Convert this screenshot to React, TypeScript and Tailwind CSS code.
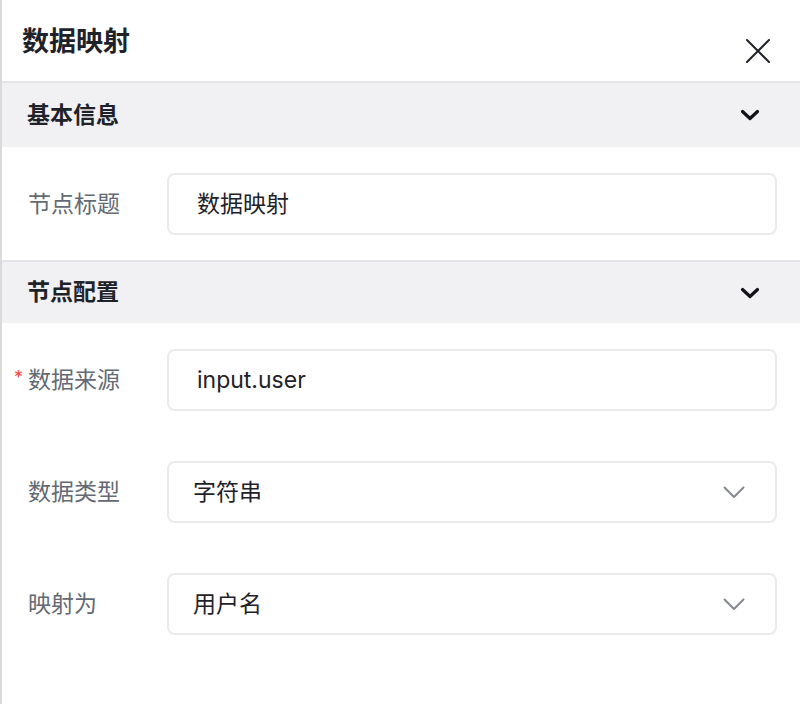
import React from 'react'

const font = { fontFamily: 'Inter, "Noto Sans CJK SC", sans-serif' }

const SectionHeader = ({ title, first = false }: { title: string; first?: boolean }) => (
  <div
    className={`flex items-center justify-between bg-[#f1f1f3] pl-[25px] pr-[40px] ${
      first ? 'h-[64px]' : 'h-[63px] border-t-2 border-[#e4e4e6]'
    }`}
  >
    <span className="text-[23px] font-bold text-[#1f2329]">{title}</span>
    <svg width="20" height="12" viewBox="0 0 20 12" fill="none">
      <path d="M2.5 2.5L10 9.5L17.5 2.5" stroke="#111318" strokeWidth="3.2" strokeLinecap="round" strokeLinejoin="round" />
    </svg>
  </div>
)

type RowProps = {
  label: string
  value: string
  required?: boolean
  select?: boolean
}

const FormRow = ({ label, value, required = false, select = false }: RowProps) => (
  <div className="flex items-center pl-[26px] pr-[23px]">
    <div className="relative w-[139px] shrink-0 text-[23px] text-[#646a73]">
      {required && <span className="absolute -left-[14px] top-[1px] text-[18px] text-[#f54a45]">*</span>}
      {label}
    </div>
    <div
      className={`flex h-[62px] flex-1 items-center justify-between rounded-[8px] border-2 border-[#ebebed] bg-white pr-[30px] text-[23px] text-[#1f2329] ${
        select ? 'pl-[24px]' : 'pl-[28px]'
      }`}
    >
      <span>{value}</span>
      {select && (
        <svg width="22" height="13" viewBox="0 0 22 13" fill="none">
          <path d="M1.5 1.5L11 11L20.5 1.5" stroke="#84888f" strokeWidth="2" strokeLinecap="round" strokeLinejoin="round" />
        </svg>
      )}
    </div>
  </div>
)

export default function App() {
  return (
    <div className="h-[704px] w-[800px] overflow-hidden border-l-2 border-[#dadada] bg-white" style={font}>
      <div className="flex h-[83px] items-start justify-between border-b-2 border-[#e4e4e6] pl-[20px] pr-[30px]">
        <h1 className="pt-[26px] text-[27px] font-bold leading-[32px] text-[#1f2329]">数据映射</h1>
        <svg className="mt-[39px]" width="24" height="24" viewBox="0 0 24 24" fill="none">
          <path d="M1 1L23 23M23 1L1 23" stroke="#1f2329" strokeWidth="2" strokeLinecap="round" />
        </svg>
      </div>

      <SectionHeader title="基本信息" first />
      <div className="pt-[26px] pb-[25px]">
        <FormRow label="节点标题" value="数据映射" />
      </div>

      <SectionHeader title="节点配置" />
      <div className="flex flex-col gap-[50px] pt-[26px]">
        <FormRow label="数据来源" value="input.user" required />
        <FormRow label="数据类型" value="字符串" select />
        <FormRow label="映射为" value="用户名" select />
      </div>
    </div>
  )
}
